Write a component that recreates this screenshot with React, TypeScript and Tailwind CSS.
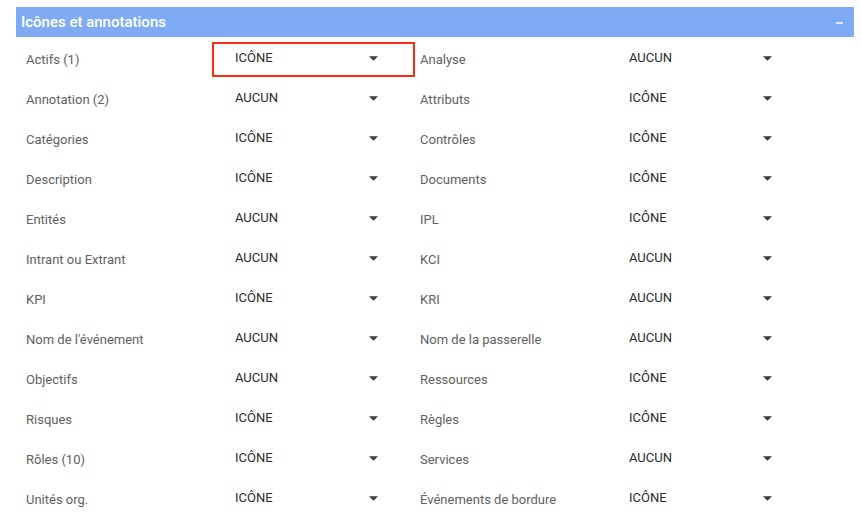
const rows: [string, string, string, string][] = [
  ['Actifs (1)', 'ICÔNE', 'Analyse', 'AUCUN'],
  ['Annotation (2)', 'AUCUN', 'Attributs', 'ICÔNE'],
  ['Catégories', 'ICÔNE', 'Contrôles', 'ICÔNE'],
  ['Description', 'ICÔNE', 'Documents', 'ICÔNE'],
  ['Entités', 'AUCUN', 'IPL', 'ICÔNE'],
  ['Intrant ou Extrant', 'AUCUN', 'KCI', 'AUCUN'],
  ['KPI', 'ICÔNE', 'KRI', 'AUCUN'],
  ["Nom de l'événement", 'AUCUN', 'Nom de la passerelle', 'AUCUN'],
  ['Objectifs', 'AUCUN', 'Ressources', 'ICÔNE'],
  ['Risques', 'ICÔNE', 'Règles', 'ICÔNE'],
  ['Rôles (10)', 'ICÔNE', 'Services', 'AUCUN'],
  ['Unités org.', 'ICÔNE', 'Événements de bordure', 'ICÔNE'],
];

const Field = ({ label, value, focused }: { label: string; value: string; focused?: boolean }) => (
  <div className="flex h-10 items-start">
    <div className="w-[196px] shrink-0 pl-[10px] pt-[15px] text-[13px] leading-4 text-[#616161]">{label}</div>
    <div
      className={`mt-[5px] flex h-[35px] w-[203px] shrink-0 items-start border-2 pl-[21px] pr-[35px] pt-[6px] ${
        focused ? 'border-[#ff2a12]' : 'border-transparent'
      }`}
    >
      <span className="flex-1 text-[13px] leading-4 text-[#2a2a2a]">{value}</span>
      <svg width="9" height="5" viewBox="0 0 10 5" className="mt-[6px]">
        <path d="M0 0h10L5 5z" fill="#3a3a3a" />
      </svg>
    </div>
  </div>
);

export default function App() {
  return (
    <div className="min-h-[528px] bg-white pt-[7px] pl-4 font-['Roboto',sans-serif]">
      <div className="w-[838px]">
        <div className="flex h-[30px] items-center justify-between bg-[#7fabf5] pl-[5px] pr-[11px]">
          <span className="text-[15px] font-medium text-white">Icônes et annotations</span>
          <span className="mt-[1px] block h-[2px] w-[7px] bg-[#dbe6fb]" />
        </div>
        <div className="grid grid-cols-[394px_394px]">
          {rows.map(([l1, v1, l2, v2], i) => (
            <div key={l1} className="contents">
              <Field label={l1} value={v1} focused={i === 0} />
              <Field label={l2} value={v2} />
            </div>
          ))}
        </div>
      </div>
    </div>
  );
}
